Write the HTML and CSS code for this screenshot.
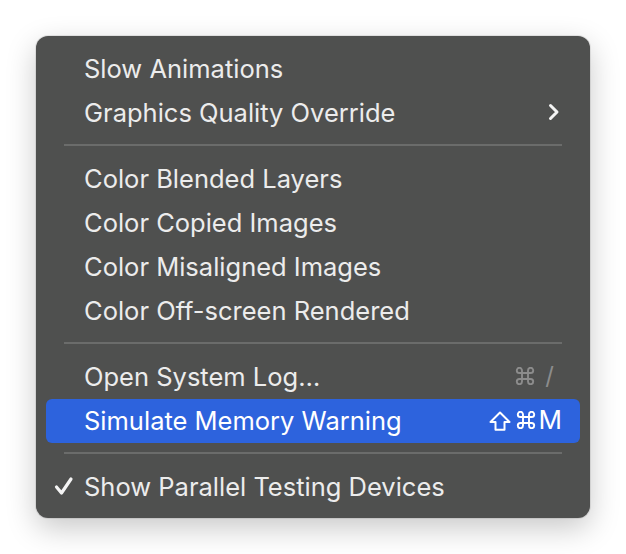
FILE: index.html
```html
<!DOCTYPE html>
<html lang="en">
<head>
<meta charset="utf-8">
<title>Debug Menu</title>
<link rel="stylesheet" href="styles.css">
</head>
<body>
<div class="menu">
  <div class="item"><span class="label">Slow Animations</span></div>
  <div class="item"><span class="label">Graphics Quality Override</span>
    <svg class="chevron" width="12" height="18" viewBox="0 0 12 18"><path d="M2.5 2.5 L9 9 L2.5 15.5" fill="none" stroke="#f4f4f4" stroke-width="3" stroke-linecap="round" stroke-linejoin="round"/></svg>
  </div>
  <div class="sep"></div>
  <div class="item"><span class="label">Color Blended Layers</span></div>
  <div class="item"><span class="label">Color Copied Images</span></div>
  <div class="item"><span class="label">Color Misaligned Images</span></div>
  <div class="item"><span class="label">Color Off-screen Rendered</span></div>
  <div class="sep"></div>
  <div class="item"><span class="label">Open System Log…</span><span class="keys dim"><svg class="cmd" width="20" height="18" viewBox="0 0 20 18"><path d="M7 14.6 V3.4 A2.6 2.6 0 1 0 4.4 6 H15.6 A2.6 2.6 0 1 0 13 3.4 V14.6 A2.6 2.6 0 1 0 15.6 12 H4.4 A2.6 2.6 0 1 0 7 14.6 Z" fill="none" stroke="#8c8c8c" stroke-width="1.9"/></svg><span class="slash">/</span></span></div>
  <div class="item active"><span class="label">Simulate Memory Warning</span><span class="keys"><svg class="shift" width="22" height="20" viewBox="0 0 22 20"><path d="M11 1.5 L20.5 11 L15.5 11 L15.5 18.8 L6.5 18.8 L6.5 11 L1.5 11 Z" fill="none" stroke="#ffffff" stroke-width="2" stroke-linejoin="round"/></svg><svg class="cmd" width="20" height="18" viewBox="0 0 20 18"><path d="M7 14.6 V3.4 A2.6 2.6 0 1 0 4.4 6 H15.6 A2.6 2.6 0 1 0 13 3.4 V14.6 A2.6 2.6 0 1 0 15.6 12 H4.4 A2.6 2.6 0 1 0 7 14.6 Z" fill="none" stroke="#ffffff" stroke-width="1.9"/></svg><span class="m">M</span></span></div>
  <div class="sep"></div>
  <div class="item"><svg class="check" width="20" height="20" viewBox="0 0 20 20"><path d="M2.5 11 L7.5 17 L17 3" fill="none" stroke="#f4f4f4" stroke-width="3.2" stroke-linecap="round" stroke-linejoin="round"/></svg><span class="label">Show Parallel Testing Devices</span></div>
</div>
</body>
</html>
```
FILE: styles.css
```css
html, body {
  margin: 0;
  padding: 0;
  background: #ffffff;
}
body {
  padding: 36px;
  font-family: Inter, "Noto Sans", "DejaVu Sans", sans-serif;
}
.menu {
  width: 554px;
  height: 482px;
  box-sizing: border-box;
  padding: 11px 0 9px;
  background: #4f504f;
  border-radius: 12px;
  box-shadow: 0 10px 30px rgba(0,0,0,0.22), 0 0 0 1px rgba(0,0,0,0.08);
  display: flex;
  flex-direction: column;
}
.item {
  position: relative;
  height: 44px;
  box-sizing: border-box;
  margin: 0 10px;
  padding: 0 18px 2px 38px;
  display: flex;
  align-items: center;
  justify-content: space-between;
  color: #ececec;
  font-size: 25.5px;
  border-radius: 6px;
}
.item.active {
  background: #2d63dd;
  color: #ffffff;
}
.keys {
  display: flex;
  align-items: center;
  line-height: 1;
}
.keys.dim {
  color: #8c8c8c;
  margin-right: 8px;
}
.slash {
  margin-left: 10px;
  font-size: 24px;
}
.shift {
  margin-right: 5px;
  margin-top: 1px;
}
.m {
  margin-left: 3px;
  font-size: 26px;
}
.chevron {
  margin-right: 2px;
}
.check {
  position: absolute;
  left: 8px;
  top: 11px;
}
.sep {
  height: 2px;
  margin: 9px 28px 11px;
  background: #6b6c6b;
}
```
